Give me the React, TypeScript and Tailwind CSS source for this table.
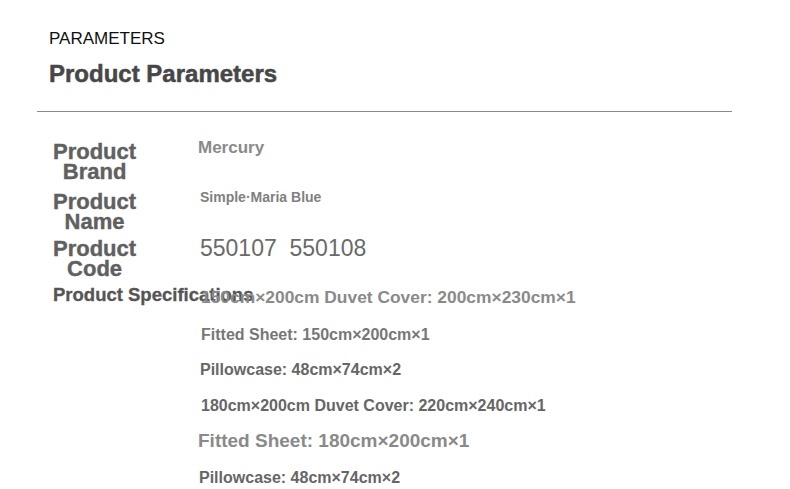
import React from 'react';

interface SpecLine {
  text: string;
  className: string;
}

const specLines: SpecLine[] = [
  { text: '150cm×200cm Duvet Cover: 200cm×230cm×1', className: 'mt-[3px] ml-[3px] text-[17.4px] text-[#8a8a8a]' },
  { text: 'Fitted Sheet: 150cm×200cm×1', className: 'mt-[21px] ml-[3px] text-[16px] text-[#777]' },
  { text: 'Pillowcase: 48cm×74cm×2', className: 'mt-[19px] ml-[2px] text-[16px] text-[#666]' },
  { text: '180cm×200cm Duvet Cover: 220cm×240cm×1', className: 'mt-[20px] ml-[3px] text-[16px] text-[#666]' },
  { text: 'Fitted Sheet: 180cm×200cm×1', className: 'mt-[17px] ml-0 text-[19px] text-[#8a8a8a]' },
  { text: 'Pillowcase: 48cm×74cm×2', className: 'mt-[20px] ml-[1px] text-[16px] text-[#666]' },
];

const Label: React.FC<{ first: string; second: string; className?: string }> = ({ first, second, className }) => (
  <div className={`w-[150px] shrink-0 px-[5px] ${className ?? ''}`}>
    <div className="w-fit text-center text-[22px] leading-[20px] font-bold text-[#606060] [-webkit-text-stroke-width:0.4px]">
      {first}
      <br />
      {second}
    </div>
  </div>
);

const App: React.FC = () => {
  return (
    <div className="w-[790px] h-[489px] overflow-hidden bg-white font-['Liberation_Sans',Arial,sans-serif]">
      {/* Heading */}
      <div className="pl-[49px] pt-[30px]">
        <p className="text-[17px] leading-none text-[#111]">PARAMETERS</p>
        <h1 className="mt-[15px] text-[24px] leading-none font-bold text-[#474747] [-webkit-text-stroke-width:0.5px]">
          Product Parameters
        </h1>
      </div>
      <div className="mt-[25px] ml-[37px] w-[695px] h-px bg-[#8a8a8a]" />

      {/* Table */}
      <div className="pl-[48px]">
        <div className="mt-[27px] flex items-start">
          <Label first="Product" second="Brand" className="mt-[3px]" />
          <p className="text-[17px] leading-none font-bold text-[#8a8a8a]">Mercury</p>
        </div>

        <div className="mt-[8px] flex items-start">
          <Label first="Product" second="Name" className="mt-[2px]" />
          <p className="ml-[2px] text-[14px] leading-none font-bold text-[#808080]">Simple·Maria Blue</p>
        </div>

        <div className="mt-[5px] flex items-start">
          <Label first="Product" second="Code" className="mt-[2px]" />
          <p className="ml-[2px] text-[23px] leading-none text-[#6a6a6a] whitespace-pre">550107  550108</p>
        </div>

        <div className="mt-[7px] flex items-start">
          <div className="w-[150px] shrink-0 px-[5px]">
            <p className="whitespace-nowrap text-[18.5px] leading-none font-bold text-[#555] [-webkit-text-stroke-width:0.3px]">
              Product Specifications
            </p>
          </div>
          <div className="flex flex-col items-start">
            {specLines.map((line, i) => (
              <p key={i} className={`leading-none font-bold whitespace-nowrap ${line.className}`}>
                {line.text}
              </p>
            ))}
          </div>
        </div>
      </div>
    </div>
  );
};

export default App;
